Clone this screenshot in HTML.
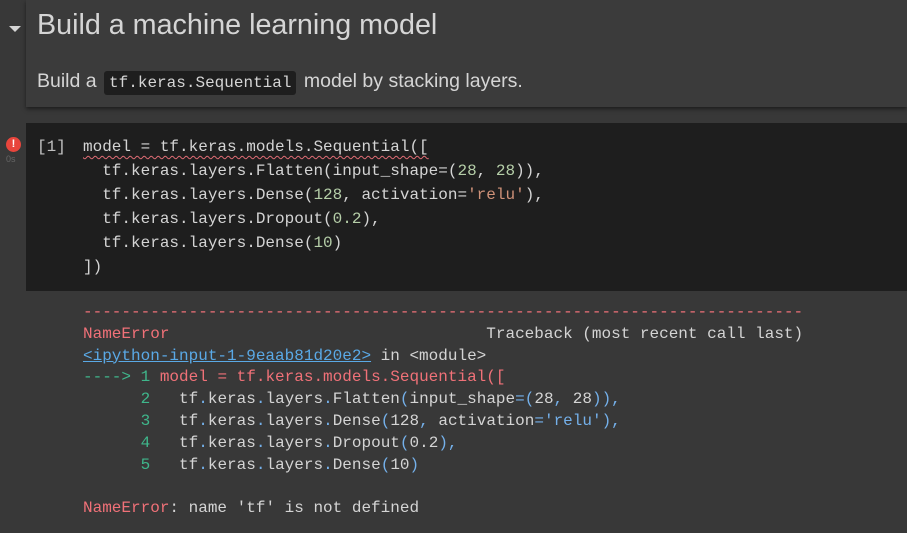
<!DOCTYPE html>
<html><head><meta charset="utf-8"><style>
html,body{margin:0;padding:0;width:907px;height:533px;overflow:hidden;background:#383838;}
body{position:relative;font-family:"Liberation Sans",sans-serif;}
.md{position:absolute;left:26px;top:0;width:881px;height:107px;background:#3b3b3b;box-shadow:0 2px 4px rgba(0,0,0,.5);}
.arrow{position:absolute;left:9px;top:26px;width:0;height:0;border-left:6px solid transparent;border-right:6px solid transparent;border-top:6px solid #d5d5d5;}
h1{position:absolute;left:37px;top:9px;margin:0;font-weight:normal;font-size:28.7px;color:#d5d5d5;}
.p{position:absolute;left:37px;top:70px;font-size:19.5px;color:#d5d5d5;white-space:nowrap;}
.p code{font-family:"Liberation Mono",monospace;font-size:16px;background:#1e1e1e;padding:3px 5px;border-radius:3px;margin:0 2px;}
.cc{position:absolute;left:26px;top:123px;width:881px;height:168px;background:#1e1e1e;}
.mono{font-family:"Liberation Mono",monospace;font-size:16px;white-space:pre;}
.code{position:absolute;left:83px;top:135px;line-height:24px;color:#d4d4d4;}
.num{position:absolute;left:37px;top:135px;line-height:24px;color:#c0c0c0;}
.err{position:absolute;left:6px;top:137px;width:15px;height:15px;border-radius:50%;background:#e8453c;color:#fff;font-size:11px;font-weight:bold;text-align:center;line-height:15px;}
.os{position:absolute;left:6px;top:154px;font-size:9px;color:#666;}
.out{position:absolute;left:83px;top:302px;line-height:21.8px;color:#d4d4d4;}
.r{color:#f07178;} .g{color:#3fb68b;} .b{color:#74b0ea;} .s{color:#ce9178;} .n{color:#b5cea8;}
.sq{text-decoration:underline wavy #e06c75;text-underline-offset:4px;text-decoration-thickness:1px;}
a{color:#5aa9e6;text-decoration:underline;}
</style></head><body>
<div class="md"></div>
<div class="arrow"></div>
<h1>Build a machine learning model</h1>
<div class="p">Build a <code>tf.keras.Sequential</code> model by stacking layers.</div>
<div class="cc"></div>
<div class="err">!</div>
<div class="os">0s</div>
<div class="num mono">[1]</div>
<div class="code mono"><span class="sq">model = tf.keras.models.Sequential([</span>
  tf.keras.layers.Flatten(input_shape=(<span class="n">28</span>, <span class="n">28</span>)),
  tf.keras.layers.Dense(<span class="n">128</span>, activation=<span class="s">'relu'</span>),
  tf.keras.layers.Dropout(<span class="n">0.2</span>),
  tf.keras.layers.Dense(<span class="n">10</span>)
])</div>
<div class="out mono"><span class="r">---------------------------------------------------------------------------</span>
<span class="r">NameError</span>                                 Traceback (most recent call last)
<a>&lt;ipython-input-1-9eaab81d20e2&gt;</a> in &lt;module&gt;
<span class="g">----&gt; 1</span> <span class="r">model = tf.keras.models.Sequential([</span>
<span class="g">      2</span>   tf<span class="b">.</span>keras<span class="b">.</span>layers<span class="b">.</span>Flatten<span class="b">(</span>input_shape<span class="b">=(</span>28<span class="b">,</span> 28<span class="b">)),</span>
<span class="g">      3</span>   tf<span class="b">.</span>keras<span class="b">.</span>layers<span class="b">.</span>Dense<span class="b">(</span>128<span class="b">,</span> activation<span class="b">=</span><span class="b">'relu'</span><span class="b">),</span>
<span class="g">      4</span>   tf<span class="b">.</span>keras<span class="b">.</span>layers<span class="b">.</span>Dropout<span class="b">(</span>0.2<span class="b">),</span>
<span class="g">      5</span>   tf<span class="b">.</span>keras<span class="b">.</span>layers<span class="b">.</span>Dense<span class="b">(</span>10<span class="b">)</span>

<span class="r">NameError</span>: name 'tf' is not defined</div>
</body></html>
